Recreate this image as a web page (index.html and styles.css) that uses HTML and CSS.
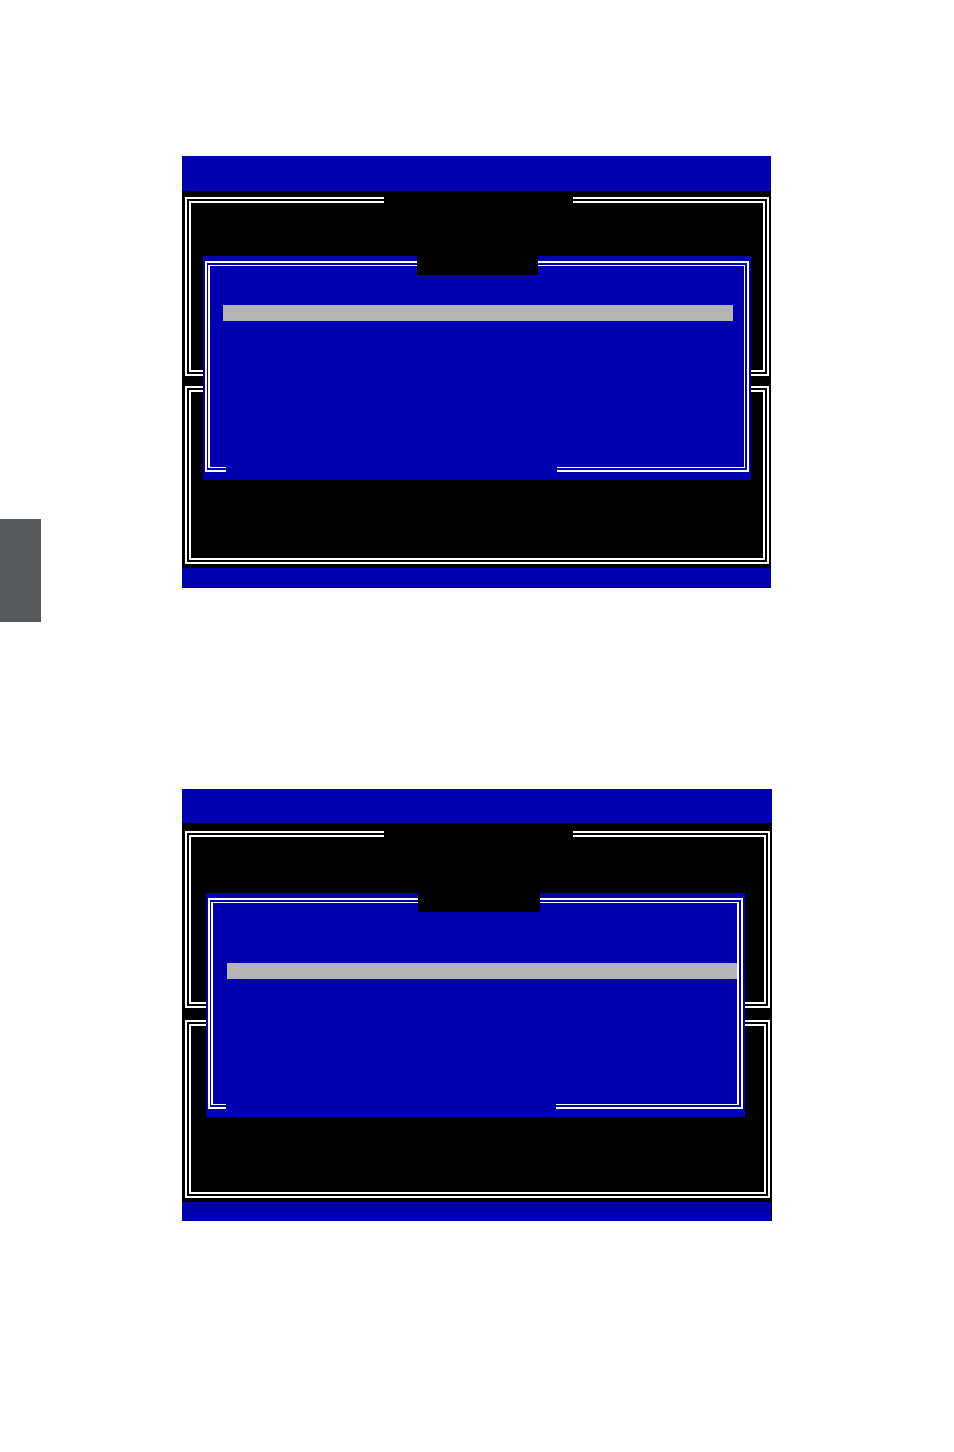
FILE: index.html
```html
<!DOCTYPE html>
<html lang="en">
<head>
    <meta charset="UTF-8">
    <meta name="viewport" content="width=device-width, initial-scale=1.0">
    <title>RAID Setup</title>
    <link rel="stylesheet" href="styles.css">
</head>
<body>
    <div class="sheet">
        <div class="tab"></div>

        <div class="screens">
            <!-- create volume menu -->
            <div class="screen screen--a">
                <div class="screen-head"></div>
                <div class="screen-body">
                    <div class="frame frame--top">
                        <span class="frame-title"></span>
                    </div>
                    <div class="frame frame--bottom"></div>
                </div>
                <div class="screen-foot"></div>

                <div class="dialog">
                    <span class="dialog-title"></span>
                    <div class="dialog-frame">
                        <div class="dialog-inner">
                            <div class="menu">
                                <div class="menu-row selected"></div>
                                <div class="menu-row"></div>
                                <div class="menu-row"></div>
                                <div class="menu-row"></div>
                            </div>
                        </div>
                    </div>
                    <span class="dialog-foot"></span>
                </div>
            </div>

            <!-- raid level menu -->
            <div class="screen screen--b">
                <div class="screen-head"></div>
                <div class="screen-body">
                    <div class="frame frame--top">
                        <span class="frame-title"></span>
                    </div>
                    <div class="frame frame--bottom"></div>
                </div>
                <div class="screen-foot"></div>

                <div class="dialog">
                    <span class="dialog-title"></span>
                    <div class="dialog-frame">
                        <div class="dialog-inner">
                            <div class="menu">
                                <div class="menu-row"></div>
                                <div class="menu-row selected"></div>
                                <div class="menu-row"></div>
                                <div class="menu-row"></div>
                            </div>
                        </div>
                    </div>
                    <span class="dialog-foot"></span>
                </div>
            </div>
        </div>
    </div>
</body>
</html>
```
FILE: styles.css
```css
body {
    margin: 0;
    background: #ffffff;
    font-family: "Liberation Mono", monospace;
}
.sheet {
    display: flex;
    align-items: flex-start;
    height: 1452px;
}
.tab {
    width: 41px;
    height: 103px;
    margin-top: 519px;
    background: #58595b;
    flex-shrink: 0;
}
.screens {
    margin-left: 141px;
    padding-top: 156px;
    display: flex;
    flex-direction: column;
    gap: 201px;
}

/* bios screen */
.screen {
    position: relative;
    width: 589px;
}
.screen-head {
    height: 35px;
    background: #0000b0;
}
.screen-body {
    background: #000000;
    display: flex;
    flex-direction: column;
    gap: 10px;
    padding: 6px 2px 4px 3px;
}
.screen-foot {
    height: 19px;
    background: #0000b0;
    border-bottom: 1px solid #000000;
}
.screen--b {
    width: 590px;
}
.screen--b .screen-head {
    height: 34px;
}
.screen--b .screen-body {
    gap: 12px;
    padding: 8px 2px 4px 3px;
}
.screen--b .screen-foot {
    border-bottom: none;
    border-right: 1px solid #000000;
}

.frame {
    position: relative;
    border: 6px double #ffffff;
    box-sizing: border-box;
}
.frame--top { height: 179px; }
.frame--bottom { height: 178px; }
.screen--b .frame--top { height: 177px; }

.frame-title {
    position: absolute;
    top: -6px;
    left: 193px;
    width: 189px;
    height: 6px;
    background: #000000;
}

/* popup dialog */
.dialog {
    position: absolute;
    left: 21px;
    top: 100px;
    width: 548px;
    height: 224px;
    box-sizing: border-box;
    padding: 5px 2px 8px 2px;
    background: #0000b0;
}
.screen--b .dialog {
    left: 24px;
    top: 104px;
    width: 539px;
}
.dialog-title {
    position: absolute;
    top: 0;
    left: 214px;
    width: 121px;
    height: 19px;
    background: #000000;
}
.screen--b .dialog-title {
    left: 212px;
    width: 122px;
}
.dialog-foot {
    position: absolute;
    top: 211px;
    left: 23px;
    width: 331px;
    height: 6px;
    background: #0000b0;
}
.screen--b .dialog-foot {
    left: 20px;
    width: 330px;
}
.dialog-frame {
    height: 100%;
    box-sizing: border-box;
    border: 2px solid #ffffff;
    padding: 2px 2px 2px 1px;
}
.dialog-inner {
    height: 100%;
    box-sizing: border-box;
    border: 1px solid #ffffff;
    border-left-width: 2px;
}
.screen--b .dialog-inner {
    border-right-width: 2px;
}

.menu {
    padding: 39px 0 0 13px;
}
.screen--b .menu {
    padding: 44px 0 0 14px;
}
.menu-row {
    width: 510px;
    height: 16px;
}
.menu-row.selected {
    background: #b4b4b4;
}
```
